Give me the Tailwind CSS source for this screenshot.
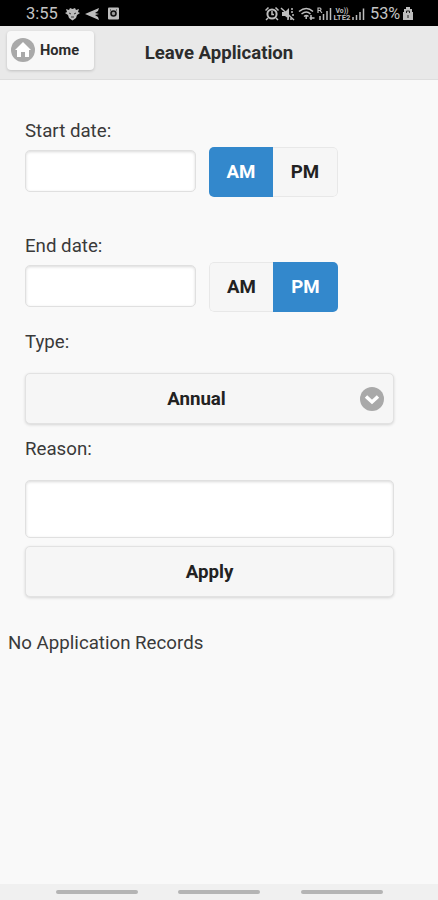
<!DOCTYPE html>
<html lang="en">
<head>
<meta charset="utf-8">
<title>Leave Application</title>
<script src="https://cdn.jsdelivr.net/npm/@tailwindcss/browser@4"></script>
</head>
<body class="bg-[#f9f9f9]">
<div class="flex h-[900px] w-[438px] flex-col overflow-hidden bg-[#f9f9f9] font-['Roboto',sans-serif] text-[18.7px] leading-6 text-[#3a3a3a]">
  <!-- Status bar -->
  <div class="flex h-[26px] shrink-0 items-center bg-black pt-[2px] pl-[26px] text-[#c4c4c4]">
    <span class="w-[39px] text-[16.5px] leading-5 whitespace-nowrap">3:55</span>
    <svg class="h-4 w-[56px] shrink-0" viewBox="0 0 56 16" fill="#bdbdbd">
      <path d="M1 3l3 1 1-2 2.500 1L10 2l1 2 3-1-1 3 2 1-3 2-1 3-3.500 2.500L4 12 3 9 0 7l2-1z"/><path d="M4 7l2 1M11 7l-2 1M6 11h3" stroke="#333"/>
      <path d="M20 8l14-6-1 3-3 2 4 1-4 1 3 2 1 3z"/>
      <rect x="43" y="1.500" width="11" height="12" rx="1"/><circle cx="48.500" cy="7.500" r="2.500" fill="#999" stroke="#111" stroke-width="1.600"/><path d="M45 4h1M51 4h1" stroke="#222"/>
    </svg>
    <svg class="ml-[144px] h-4 w-[101px] shrink-0" viewBox="0 0 101 16" fill="none" stroke="#bdbdbd" stroke-width="1.500">
      <!-- Alarm -->
      <circle cx="7" cy="8" r="4.600" stroke-width="2"/><path d="M0.500 4.500l3-3M13.500 4.500l-3-3M3 12l-2 2M11 12l2 2M7 5v3.500h2"/>
      <!-- Muted speaker -->
      <path d="M17 6h3l4-4v11l-4-3h-3z" fill="#bdbdbd" stroke="none"/><path d="M16 2l13 12"/><path d="M26 3h3M26 6h3M27 9h2M22 13h5" stroke-dasharray="2 1"/>
      <!-- Wi-Fi -->
      <path d="M34 5.500q7.500-6 14 0M36.500 8q5-4 9 0M39 10.500q2.500-2 4.500 0"/><path d="M41.200 10v3M46 9v5M44.500 12h5"/>
      <!-- Roaming signal -->
      <path d="M53 7V2h2q2 1 0 2.500h-2M55 4.500L57 7" stroke-width="1.200"/><path d="M55 14v-4M58.500 14V8M62 14V5M65.500 14V2"/>
      <!-- Second signal -->
      <path d="M88 14v-3M91.500 14V9M95 14V6M98.500 14V2.500"/>
      <g fill="#bdbdbd" stroke="none" font-family="Roboto,sans-serif" font-weight="700"><text x="70.500" y="7" font-size="7.500" textLength="13" lengthAdjust="spacingAndGlyphs">Vo))</text><text x="68.500" y="14.300" font-size="7.500" textLength="17" lengthAdjust="spacingAndGlyphs">LTE2</text></g>
    </svg>
    <span class="ml-[4px] text-[16.3px] leading-5">53%</span>
    <svg class="ml-[3px] h-4 w-[10px] shrink-0" viewBox="0 0 10 16"><path d="M3 1h4v2h2v3h1v8H0V6h1V3h2z" fill="#bdbdbd"/><path d="M3.500 7V5h3v2M5 9v3" fill="none" stroke="#222"/></svg>
  </div>
  <!-- Header -->
  <header class="relative flex h-[54px] shrink-0 items-center justify-center border-b border-[#dedede] bg-[#e9e9e9]">
    <button class="absolute top-[5px] left-[7px] flex h-[39px] w-[87px] items-center rounded-[4px] bg-[#f8f8f8] pb-[2px] pl-[4px] text-[14.6px] font-bold text-[#2c2c2c] shadow-[0_1px_3px_rgba(0,0,0,.18)]">
      <svg class="mr-[5px] size-6" viewBox="0 0 24 24"><circle cx="12" cy="12" r="12" fill="#a9a9a9"/><path d="M12 4l8 8h-2v7h-4v-5h-4v5H6v-7H4z" fill="#fff"/></svg>Home
    </button>
    <h1 class="text-[18.6px] font-bold text-[#2c2c2c]">Leave Application</h1>
  </header>
  <main class="flex flex-col px-[25px] pt-[39px]">
    <label>Start date:</label>
    <div class="mt-[4px] flex">
      <div class="mt-[3px] h-[42px] w-[171px] rounded-[5px] border border-[#e0e0e0] bg-white shadow-[inset_0_1px_3px_rgba(0,0,0,.15)]"></div>
      <div class="ml-[13px] flex h-[50px] w-[129px] overflow-hidden rounded-[5px] text-center leading-[51px] font-bold text-[#222]">
        <div class="w-[64px] bg-[#3388cc] text-white">AM</div>
        <div class="w-[65px] rounded-r-[5px] border border-l-0 border-[#e8e8e8] bg-[#f6f6f6] leading-[49px]">PM</div>
      </div>
    </div>
    <label class="mt-[37px]">End date:</label>
    <div class="mt-[4px] flex">
      <div class="mt-[3px] h-[42px] w-[171px] rounded-[5px] border border-[#e0e0e0] bg-white shadow-[inset_0_1px_3px_rgba(0,0,0,.15)]"></div>
      <div class="ml-[13px] flex h-[50px] w-[129px] overflow-hidden rounded-[5px] text-center leading-[51px] font-bold text-[#222]">
        <div class="w-[64px] rounded-l-[5px] border border-r-0 border-[#e8e8e8] bg-[#f6f6f6] leading-[49px]">AM</div>
        <div class="w-[65px] bg-[#3388cc] text-white">PM</div>
      </div>
    </div>
    <label class="mt-[18px]">Type:</label>
    <button class="relative mt-[19px] h-[51px] w-[369px] rounded-[5px] border border-[#e2e2e2] bg-[#f6f6f6] pr-[26px] font-bold text-[#222] shadow-[0_1px_3px_rgba(0,0,0,.15)]">Annual
      <svg class="absolute top-[13px] right-[9px] size-6" viewBox="0 0 24 24"><circle cx="12" cy="12" r="12" fill="#a9a9a9"/><path d="M6 9.500l6 5.500 6-5.500" fill="none" stroke="#fff" stroke-width="3.500"/></svg>
    </button>
    <label class="mt-[13px]">Reason:</label>
    <div class="mt-[19px] h-[58px] w-[369px] rounded-[5px] border border-[#e0e0e0] bg-white shadow-[inset_0_1px_3px_rgba(0,0,0,.15)]"></div>
    <button class="mt-[8px] h-[51px] w-[369px] rounded-[5px] border border-[#e2e2e2] bg-[#f6f6f6] font-bold text-[#222] shadow-[0_1px_3px_rgba(0,0,0,.15)]">Apply</button>
  </main>
  <p class="mt-[34px] pl-2">No Application Records</p>
  <nav class="mt-auto flex h-4 shrink-0 items-center bg-[#f0f0f0] pl-[56px]">
    <span class="h-1 w-[82px] rounded-full bg-[#b4b4b4]"></span>
    <span class="ml-[40px] h-1 w-[82px] rounded-full bg-[#b4b4b4]"></span>
    <span class="ml-[41px] h-1 w-[82px] rounded-full bg-[#b4b4b4]"></span>
  </nav>
</div>
</body>
</html>
